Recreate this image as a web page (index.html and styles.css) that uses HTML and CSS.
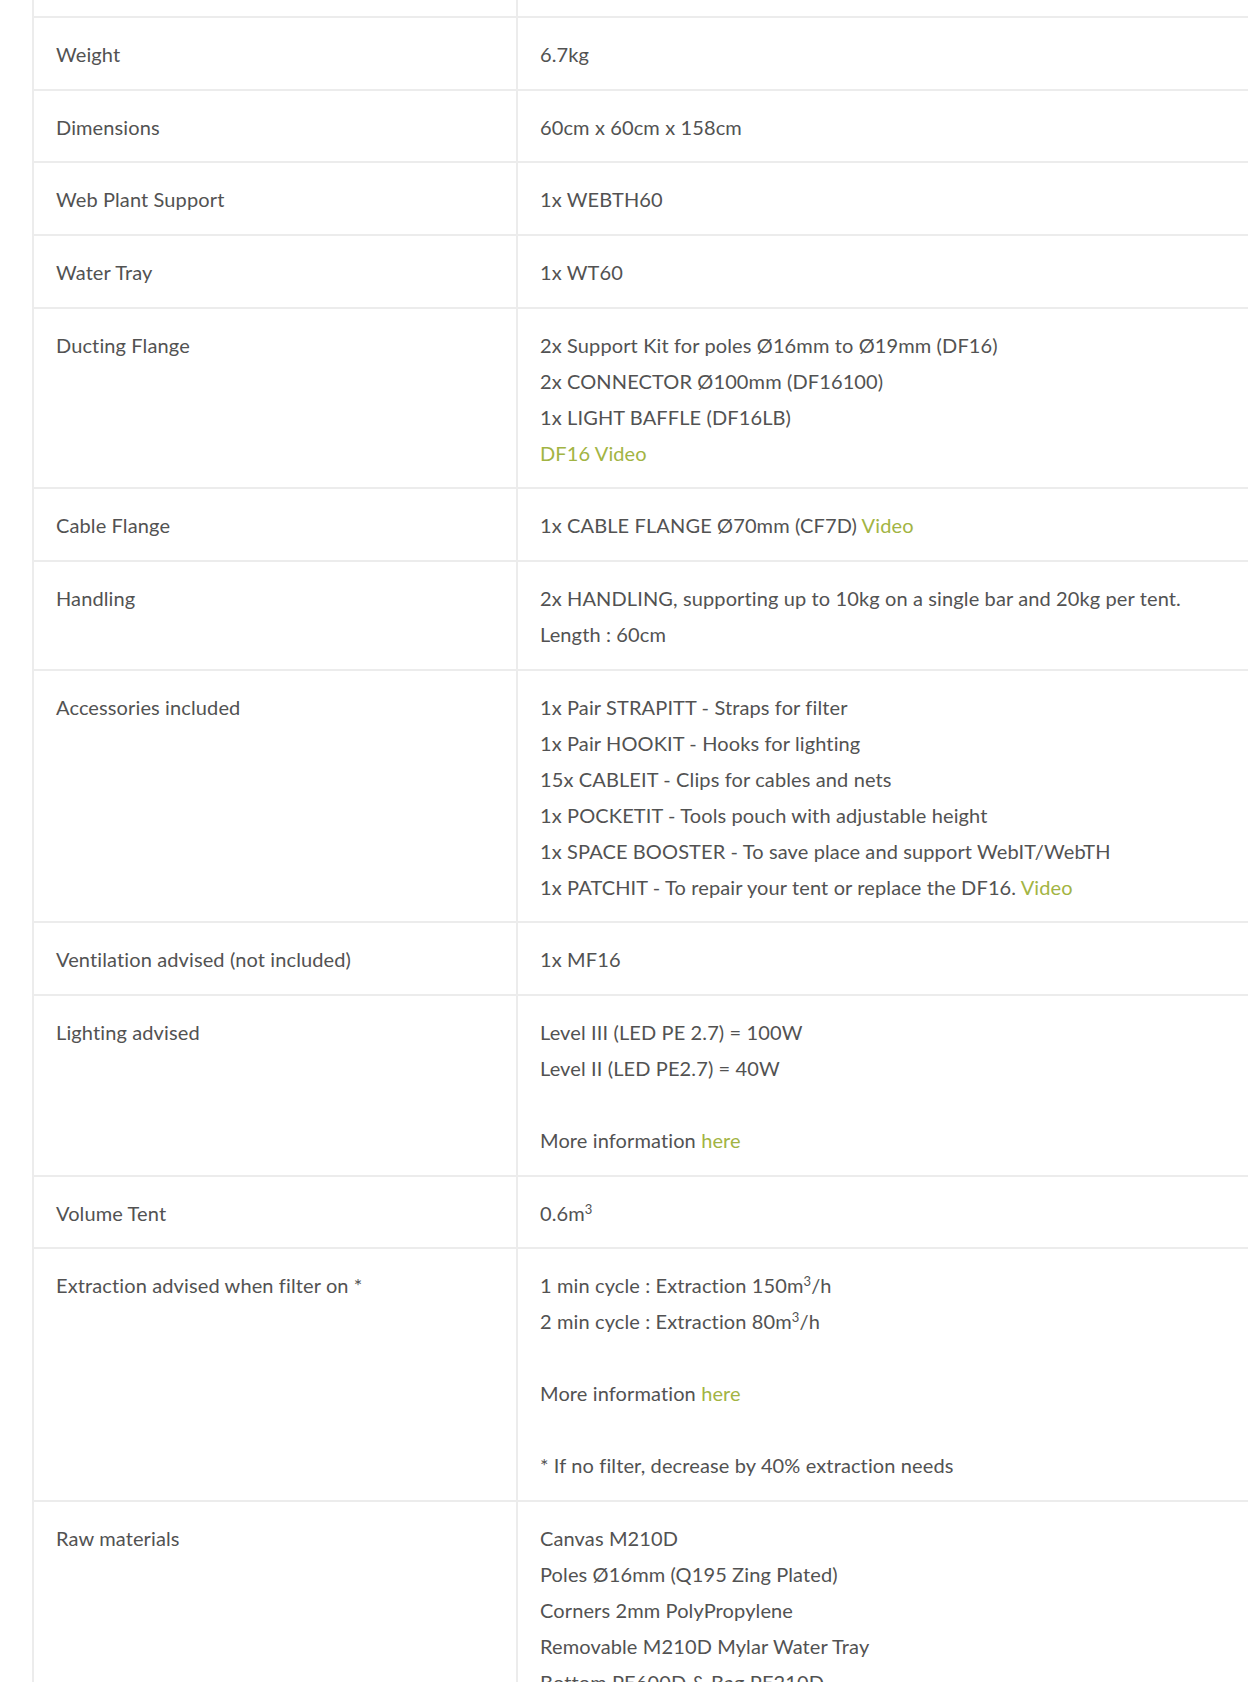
FILE: index.html
```html
<!DOCTYPE html>
<html lang="en">
<head>
<meta charset="utf-8">
<title>Specifications</title>
<link rel="stylesheet" href="styles.css">
</head>
<body>
<div class="wrap">
<table class="specs">
  <colgroup><col class="col-label"><col class="col-value"></colgroup>
  <tbody>
    <tr class="spacer"><td></td><td></td></tr>
    <tr><td>Weight</td><td>6.7kg</td></tr>
    <tr><td>Dimensions</td><td>60cm x 60cm x 158cm</td></tr>
    <tr><td>Web Plant Support</td><td>1x WEBTH60</td></tr>
    <tr><td>Water Tray</td><td>1x WT60</td></tr>
    <tr><td>Ducting Flange</td><td>2x Support Kit for poles Ø16mm to Ø19mm (DF16)<br>2x CONNECTOR Ø100mm (DF16100)<br>1x LIGHT BAFFLE (DF16LB)<br><a href="#">DF16 Video</a></td></tr>
    <tr><td>Cable Flange</td><td>1x CABLE FLANGE Ø70mm (CF7D) <a href="#">Video</a></td></tr>
    <tr><td>Handling</td><td>2x HANDLING, supporting up to 10kg on a single bar and 20kg per tent.<br>Length : 60cm</td></tr>
    <tr><td>Accessories included</td><td>1x Pair STRAPITT - Straps for filter<br>1x Pair HOOKIT - Hooks for lighting<br>15x CABLEIT - Clips for cables and nets<br>1x POCKETIT - Tools pouch with adjustable height<br>1x SPACE BOOSTER - To save place and support WebIT/WebTH<br>1x PATCHIT - To repair your tent or replace the DF16. <a href="#">Video</a></td></tr>
    <tr><td>Ventilation advised (not included)</td><td>1x MF16</td></tr>
    <tr><td>Lighting advised</td><td>Level III (LED PE 2.7) = 100W<br>Level II (LED PE2.7) = 40W<br><br>More information <a href="#">here</a></td></tr>
    <tr><td>Volume Tent</td><td>0.6m<sup>3</sup></td></tr>
    <tr><td>Extraction advised when filter on *</td><td>1 min cycle : Extraction 150m<sup>3</sup>/h<br>2 min cycle : Extraction 80m<sup>3</sup>/h<br><br>More information <a href="#">here</a><br><br>* If no filter, decrease by 40% extraction needs</td></tr>
    <tr><td>Raw materials</td><td>Canvas M210D<br>Poles Ø16mm (Q195 Zing Plated)<br>Corners 2mm PolyPropylene<br>Removable M210D Mylar Water Tray<br>Bottom PE600D &amp; Bag PE210D<br>Zips YKK</td></tr>
  </tbody>
</table>
</div>
</body>
</html>
```
FILE: styles.css
```css
html, body {
  margin: 0;
  padding: 0;
  background: #ffffff;
  overflow: hidden;
}
.wrap {
  padding-left: 32px;
  width: 1300px;
}
.specs {
  border-collapse: collapse;
  width: 1260px;
  font-family: "Lato", "Liberation Sans", sans-serif;
  font-size: 20px;
  line-height: 36px;
  letter-spacing: 0.12px;
  color: #525252;
}
.col-label { width: 484px; }
.specs td {
  border: 2px solid #ececec;
  padding: 18px 22px 16.67px 22px;
  vertical-align: top;
  text-align: left;
}
.specs .spacer td {
  height: 16px;
  padding: 0;
  border-top: 0;
}
.specs a {
  color: #a2b443;
  text-decoration: none;
}
.specs sup {
  font-size: 13px;
  line-height: 0;
  vertical-align: 7px;
}
```
